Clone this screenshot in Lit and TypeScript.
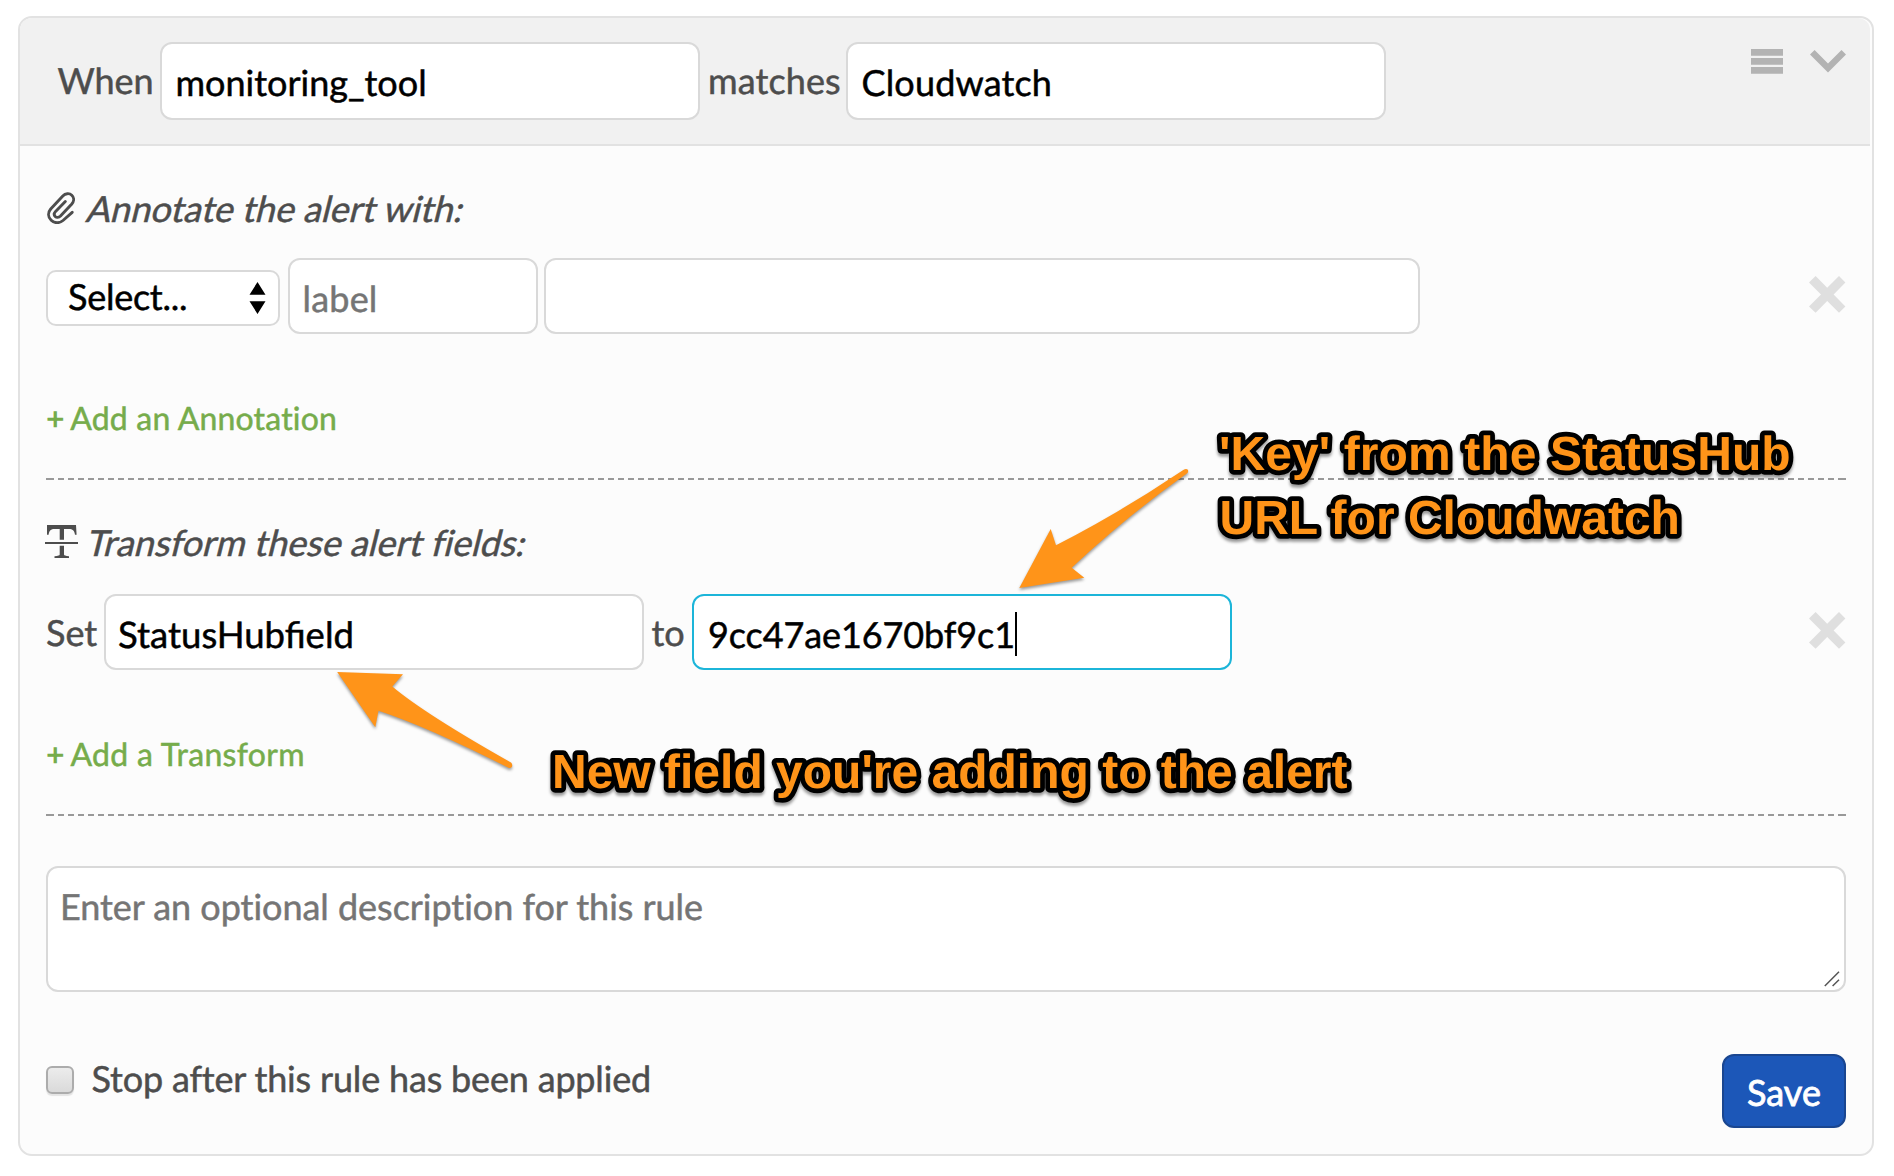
import { LitElement, html, css } from "lit";

class RuleIcon extends LitElement {
  static properties = { name: { type: String } };
  declare name: string;

  static styles = css`
    :host { display: block; flex: none; line-height: 0; }
    svg { display: block; }
  `;

  render() {
    switch (this.name) {
      case "clip":
        return html`<svg width="28" height="32" viewBox="0 0 28 32" fill="none" stroke="#4d4d4d" stroke-width="2.900" stroke-linecap="round">
          <path d="M25.200 20.300 16 28.500C12.500 31.400 7.500 31.500 4.200 28.300C.8 25 .8 20.400 3.700 17L15.800 4C18.400 1.200 22.400.9 24.800 3.200C27.200 5.500 27.200 9.200 24.800 12L13.500 24C11.700 25.800 9.500 25.800 8.200 24.500C6.900 23.200 7 21.200 8.600 19.400L18.300 9.500" />
        </svg>`;
      case "transform":
        return html`<svg width="33" height="33" viewBox="0 0 33 33" fill="#4d4d4d">
          <path d="M2 0h29l.6 9.7h-1.6C29.4 5.600 27.500 4 24 4H19v10.700h-4.300V4H9.500C6 4 4.200 5.600 3.600 9.700H2zM0 17h33v2H0zM14.700 20.700H19V29.600c0 1 1.500 1.400 5 1.600V33H9.500v-1.800c3.700-.2 5.200-.6 5.200-1.600z" />
        </svg>`;
      case "menu":
        return html`<svg width="32" height="25" viewBox="0 0 32 25" fill="#b3b3b3">
          <path d="M0 0h32v6.700H0zM0 9h32v6.700H0zM0 18h32v6.700H0z" />
        </svg>`;
      case "chevron":
        return html`<svg width="36" height="23" viewBox="0 0 36 23" fill="#b3b3b3">
          <path d="M4.600 0 0 4.500 18 22.500 36 4.500 31.500 0 18 13.600z" />
        </svg>`;
      case "sort":
        return html`<svg width="17" height="32" viewBox="0 0 17 32" fill="#000">
          <path d="M8.500 0 16.500 12.700H.5zM8.500 32 .5 19.200h16z" />
        </svg>`;
      case "resize":
        return html`<svg width="16" height="16" viewBox="0 0 16 16" fill="none" stroke="#555" stroke-width="1.500">
          <path d="M.8 15 15 .8M8.600 15 15 8.800" />
        </svg>`;
      default:
        return html`<svg width="37" height="37" viewBox="0 0 37 37" fill="#dfdfdf">
          <path d="M6.600 0 0 6.400 12 18.400 0 30.400 6.600 36.700 18.200 25 30 36.700 36.400 30.400 24.600 18.400 36.400 6.400 30 0 18.200 11.700z" />
        </svg>`;
    }
  }
}
customElements.define("rule-icon", RuleIcon);

class AppRoot extends LitElement {
  static styles = css`
    :host {
      display: block;
      position: relative;
      box-sizing: border-box;
      width: 1894px;
      height: 1176px;
      padding: 16px 20px 20px 18px;
      overflow: hidden;
      background: #fff;
      color: #4d4d4d;
      font: 36px/44px Lato, "Liberation Sans", sans-serif;
      text-rendering: geometricPrecision;
      -webkit-text-stroke: .5px currentColor;
      white-space: nowrap;
    }
    * { box-sizing: border-box; }
    .card {
      height: 1140px;
      background: #fcfcfc;
      border: 2px solid #e2e2e2;
      border-radius: 14px;
    }
    .head {
      display: flex;
      align-items: flex-start;
      height: 128px;
      margin-right: 2px;
      padding: 24px 24px 0 37.500px;
      background: #f1f1f1;
      border-bottom: 2px solid #e2e2e2;
      border-radius: 12px 12px 0 0;
    }
    .word { margin-top: 16px; }
    .when { width: 102.500px; letter-spacing: -.1px; }
    .matches { width: 138px; margin-left: 8px; letter-spacing: .12px; }
    .field {
      width: 540px;
      height: 76px;
      padding: 16px 13.500px;
      color: #000;
      background: #fff;
      border: 2px solid #d9d9d9;
      border-radius: 12px;
    }
    .head .field { height: 78px; }
    .matches + .field { letter-spacing: .15px; }
    .tools { display: flex; gap: 27px; margin: 7px 0 0 auto; }
    .tools .chev { margin-top: 1px; }
    .body { padding: 0 26px; }
    .title { display: flex; height: 44px; margin-top: 40px; }
    .title .slant { transform: skewX(-14deg); transform-origin: 0 36px; }
    .clip { margin: 6px 10.500px 0 .5px; }
    .tee { margin: 5px 6.500px 0 -1px; }
    .tee + .slant { letter-spacing: .02px; font-variant-ligatures: common-ligatures; }
    .row { display: flex; align-items: flex-start; height: 76px; }
    .row.annotate { margin-top: 28px; }
    .row.transform { margin-top: 30px; }
    .select {
      display: flex;
      justify-content: space-between;
      width: 234px;
      height: 56px;
      margin: 12px 8px 0 0;
      padding: 2px 12px 0 20px;
      color: #000;
      background: #fff;
      border: 2px solid #d9d9d9;
      border-radius: 10px;
      letter-spacing: -.25px;
    }
    .sort { margin-top: 7.500px; }
    .row .label { width: 250px; margin-right: 6px; letter-spacing: .2px; padding-left: 12.500px; }
    .row .wide { width: 876px; }
    .hint { color: #757575; }
    .remove { margin: 18px 0 0 auto; }
    .set { width: 58px; }
    .set + .field { padding-left: 12px; font-size: 36.500px; }
    .to { width: 48px; padding-left: 7.500px; }
    .row .focus { display: flex; border-color: #1cb5d9; padding-left: 14px; letter-spacing: -.1px; }
    .caret { width: 2px; height: 44px; background: #000; }
    .add { height: 39px; margin-top: 64px; font-size: 32px; line-height: 39px; color: #76ac4b; letter-spacing: .18px; }
    .row.transform + .add { letter-spacing: .32px; }
    .plus { font-weight: 700; margin-right: 5.500px; -webkit-text-stroke: 0; }
    .rule {
      height: 2px;
      margin-top: 41px;
      background:
        linear-gradient(#999, #999) 0 0 / 2px 2px no-repeat,
        linear-gradient(#999, #999) 100% 0 / 2px 2px no-repeat,
        repeating-linear-gradient(90deg, #999 0 6px, transparent 6px 10px) 2px 0 / 1796px 2px no-repeat;
    }
    .area {
      position: relative;
      height: 126px;
      margin-top: 50px;
      padding: 16px 12px;
      background: #fff;
      border: 2px solid #d9d9d9;
      border-radius: 12px;
      letter-spacing: -.04px;
    }
    .grip { position: absolute; right: 4px; bottom: 3px; }
    .foot { display: flex; align-items: flex-start; margin-top: 62px; }
    .check {
      width: 28px;
      height: 28px;
      margin-top: 12px;
      border: 2px solid #acacac;
      border-radius: 6px;
      background: linear-gradient(#ececec, #dadada);
      box-shadow: 0 2px 1px #e4e4e4;
    }
    .stop { margin: 2px 0 0 17.500px; letter-spacing: -.18px; }
    .save {
      display: block;
      width: 124px;
      height: 74px;
      margin-left: auto;
      padding: 2px 0 0;
      color: #fff;
      font: inherit;
      line-height: 44px;
      -webkit-text-stroke: .8px currentColor;
      text-align: center;
      background: #1c57b8;
      border: 2px solid #1a4690;
      border-radius: 12px;
    }
    .notes { position: absolute; left: 0; top: 0; width: 1894px; height: 1176px; pointer-events: none; }
    .arrow { fill: #ff9419; filter: drop-shadow(0 2px 1.500px rgba(0, 0, 0, .4)); }
    .note {
      font: bold 48px "Liberation Sans", Arial, sans-serif;
      -webkit-text-stroke: 0;
      fill: #ff9419;
      stroke: #000;
      stroke-width: 9.500px;
      stroke-linejoin: round;
      paint-order: stroke;
      filter: drop-shadow(0 3px 1.500px rgba(0, 0, 0, .4));
    }
    .key { letter-spacing: .09px; }
  `;

  render() {
    return html`
      <section class="card">
        <header class="head">
          <div class="word when">When</div>
          <div class="field" role="textbox">monitoring_tool</div>
          <div class="word matches">matches</div>
          <div class="field" role="textbox">Cloudwatch</div>
          <div class="tools">
            <rule-icon name="menu"></rule-icon>
            <rule-icon class="chev" name="chevron"></rule-icon>
          </div>
        </header>
        <div class="body">
          <div class="title">
            <rule-icon class="clip" name="clip"></rule-icon>
            <span class="slant">Annotate the alert with:</span>
          </div>
          <div class="row annotate">
            <div class="select" role="combobox">Select...<rule-icon class="sort" name="sort"></rule-icon></div>
            <div class="field label hint" role="textbox">label</div>
            <div class="field wide" role="textbox"></div>
            <rule-icon class="remove" name="remove"></rule-icon>
          </div>
          <div class="add"><span class="plus">+</span>Add an Annotation</div>
          <div class="rule"></div>
          <div class="title">
            <rule-icon class="tee" name="transform"></rule-icon>
            <span class="slant">Transform these alert fields:</span>
          </div>
          <div class="row transform">
            <div class="word set">Set</div>
            <div class="field" role="textbox">StatusHubfield</div>
            <div class="word to">to</div>
            <div class="field focus" role="textbox"><span>9cc47ae1670bf9c1</span><span class="caret"></span></div>
            <rule-icon class="remove" name="remove"></rule-icon>
          </div>
          <div class="add"><span class="plus">+</span>Add a Transform</div>
          <div class="rule"></div>
          <div class="area hint" role="textbox">Enter an optional description for this rule<rule-icon class="grip" name="resize"></rule-icon></div>
          <footer class="foot">
            <span class="check" role="checkbox"></span>
            <span class="stop">Stop after this rule has been applied</span>
            <button class="save">Save</button>
          </footer>
        </div>
      </section>
      <svg class="notes" viewBox="0 0 1894 1176">
        <path class="arrow" d="M337.200 672 403 674.200 392.300 686.500Q425 714 511 762.500Q513 764.500 511.800 767Q510.500 768.500 508.500 767.800Q428 727 378.500 710.700L375.300 727.300Z" />
        <path class="arrow" d="M1019.300 588 1084.300 577.700 1071.700 567.700Q1127 516 1187.500 473Q1188.800 471 1187.600 469.500Q1186 468.300 1183.300 470Q1120 512.600 1056 545.300L1050.700 529Z" />
        <text class="note key" x="1219" y="470">'Key' from the StatusHub</text>
        <text class="note" x="1219.500" y="534">URL for Cloudwatch</text>
        <text class="note" x="552" y="787.700">New field you're adding to the alert</text>
      </svg>
    `;
  }
}
customElements.define("app-root", AppRoot);
